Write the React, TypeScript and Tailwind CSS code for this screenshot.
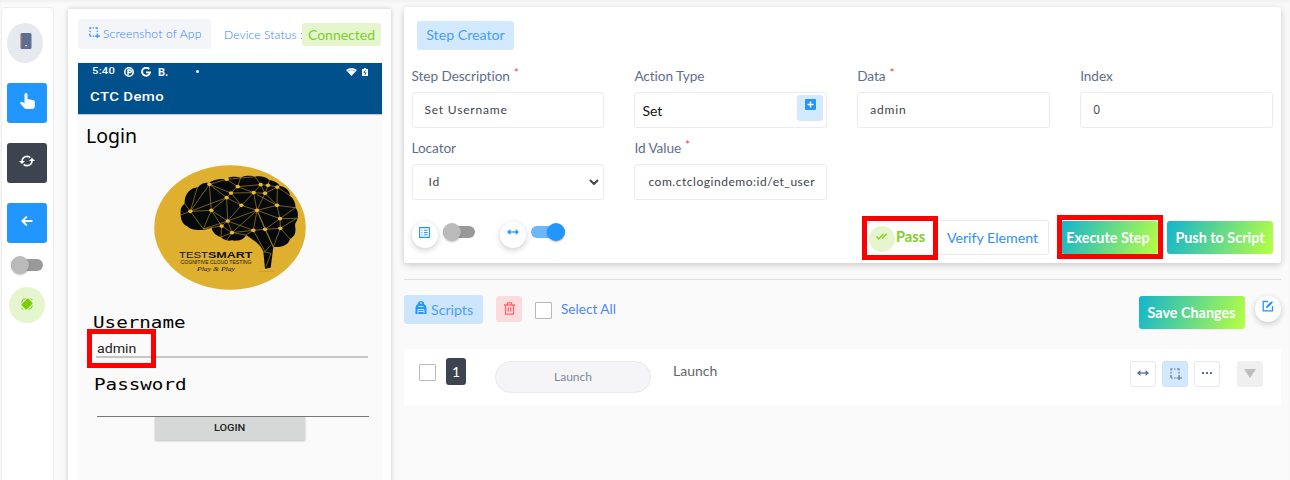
import React from "react";

type P = { children?: React.ReactNode; className?: string };

const gradient =
  "flex h-[33px] shrink-0 items-center justify-center rounded-[3px] bg-linear-[110deg,#12b4cf_0%,#b2fe45_97%] text-[14.4px] font-bold whitespace-nowrap text-white";

function Svg({ children, className = "", box = "0 0 24 24" }: P & { box?: string }) {
  return (
    <svg viewBox={box} className={`block shrink-0 ${className}`} fill="none" stroke="currentColor" strokeWidth="2">
      {children}
    </svg>
  );
}

function Selection({ className = "" }: P) {
  return (
    <Svg box="0 0 12 12" className={className}>
      <path
        d="M1 1h1.5M4 1h1.5M7 1h2M1 10h1.5M4 10h1.5M1 .5v2M1 4v1.5M1 7v3M9 .5v2M9 4v1.5M9 7v5M6.5 10H12"
        strokeWidth="1.2"
      />
    </Svg>
  );
}

function Arrows({ className = "" }: P) {
  return (
    <Svg box="0 0 12 8" className={className}>
      <path d="M1 4h10" strokeWidth="1.3" />
      <path d="M0 4l3.4-3v6zM12 4L8.600 1v6z" fill="currentColor" stroke="none" />
    </Svg>
  );
}

function ToggleOff() {
  return (
    <div className="flex h-3 w-8 items-center rounded-full bg-[#999]">
      <div className="size-[18px] shrink-0 rounded-full bg-[#bababa] shadow-[0_1px_2px_rgba(0,0,0,0.25)]" />
    </div>
  );
}

function ToggleOn() {
  return (
    <div className="flex h-3 w-[34px] items-center justify-end rounded-full bg-[#6cb6fa]">
      <div className="size-[18px] shrink-0 rounded-full bg-[#2196ff] shadow-[0_1px_2px_rgba(0,0,0,0.25)]" />
    </div>
  );
}

function Round({ children, className = "" }: P) {
  return (
    <div className={`flex size-[26px] shrink-0 justify-center rounded-full bg-white text-[#2196ff] shadow-[0_2px_6px_rgba(0,0,0,0.2)] ${className}`}>
      {children}
    </div>
  );
}

function Field({ label, required, children }: P & { label: string; required?: boolean }) {
  return (
    <div className="h-[72px]">
      <div className="flex h-6 text-[13.6px] leading-[17px] tracking-[-0.05px] text-[#5e6e8d]">
        {label}
        {required && <span className="-mt-1 ml-1 text-[12px] text-[#ef4444]">*</span>}
      </div>
      <div className="flex h-9 items-center overflow-hidden rounded-[3px] border border-[#ececee] bg-white text-[12px] tracking-[0.8px] whitespace-nowrap text-[#40444c]">
        {children}
      </div>
    </div>
  );
}

function Sidebar() {
  return (
    <aside className="mt-[7px] ml-[1px] h-[480px] w-[53px] shrink-0 rounded-sm border border-[#eee] bg-white pt-[15px] pl-[5px]">
      <div className="flex h-10 w-9 justify-center rounded-[50%] bg-[#e6eaef] pt-[10px] pl-[1px]">
        <svg viewBox="0 0 12 16" className="h-4 w-3">
          <rect x=".5" width="11" height="16" rx="1.500" fill="#5e6e93" />
          <rect x=".5" y="2" width=".7" height="12" fill="#df9b7c" />
          <rect x="5.400" y="12" width="1.500" height="1.300" fill="#fff" />
        </svg>
      </div>
      <div className="mt-5 flex size-10 items-start justify-center rounded-[3px] bg-[#2196ff] pt-[10px]">
        <svg viewBox="0 0 15 16" className="h-4 w-[15px]" fill="#fff">
          <path d="M4.500 1.600a1.500 1.500 0 0 1 3 0V6l6 1.300q1.300.3 1.300 1.600V13q0 3-2.800 3H6.200q-1.200 0-2-.9L.3 10.400q-.6-1 .5-1.500 1.200-.4 2.200.4l1.500 1.200z" />
        </svg>
      </div>
      <div className="mt-5 flex size-10 items-start justify-center rounded-[3px] bg-[#3d4450] pt-3 text-white">
        <Svg box="0 0 16 12" className="h-3 w-4">
          <path d="M3 6.500C3 3.500 5 1.300 8 1.300q2 0 3.300 1.300M13 5.500c0 3-2 5.200-5 5.200q-2 0-3.300-1.300" strokeWidth="1.700" />
          <path d="M0 6h6L3 9zM10 6h6l-3-3.200z" fill="#fff" stroke="none" />
        </Svg>
      </div>
      <div className="mt-5 flex size-10 items-start justify-center rounded-[3px] bg-[#2196ff] pt-[13px] text-white">
        <Svg box="0 0 12 10" className="h-[10px] w-3">
          <path d="M11.500 5H1.500M5.800.600L1.300 5l4.500 4.400" strokeWidth="1.900" />
        </Svg>
      </div>
      <div className="mt-4 ml-1">
        <ToggleOff />
      </div>
      <div className="mt-4 ml-[2px] flex size-9 items-start justify-center rounded-full bg-[#e5f6cf] pt-[11px]">
        <svg viewBox="0 0 12 12" className="size-3" fill="#76cf00">
          <rect x="1.300" y="2.400" width="9.400" height="7.200" rx="1" transform="rotate(-45 6 6)" />
          <path d="M.600 4.500Q.800 1 4.500.600M11.400 7.500q-.2 3.500-3.900 3.900M10 .5l1.500 1.500M.5 10L2 11.500" stroke="#76cf00" fill="none" />
        </svg>
      </div>
    </aside>
  );
}

const nodes = [
  [260, 73], [208, 88], [293, 95], [273, 114], [260, 128], [304, 151], [214, 166], [151, 169], [263, 198], [245, 213], [276, 233],
  [341, 113], [375, 115], [362, 89], [384, 91], [412, 96], [411, 151], [351, 166], [420, 191], [340, 226], [375, 223], [421, 220],
];

function BrainLogo() {
  return (
    <svg viewBox="0 0 152 125" className="h-[125px] w-[152px]">
      <ellipse cx="76" cy="62.500" rx="75.800" ry="62.300" fill="#dfb02f" />
      <g transform="translate(-14 -10) scale(.33333)">
        <path
          fill="#06090b"
          d="M122 172Q120 155 134 146C132 120 150 98 174 97C182 86 196 82 208 84C212 77 235 70 258 72C275 62 292 66 302 68C315 60 335 62 345 65C362 62 380 66 388 76C400 76 415 84 418 92C436 94 450 108 450 122C462 132 468 146 466 158C476 166 476 190 468 202C462 208 468 218 466 230C465 242 455 248 450 252C446 268 430 278 400 276L392 338L375 341L370 290C362 270 350 262 318 240C312 256 290 259 275 256C262 260 245 250 243 246C226 242 217 230 215 218C190 230 150 226 142 214C126 208 121 190 122 172Z"
        />
        <g stroke="#c79c2b" strokeWidth="1.700" fill="none">
          <path d="M151 169L208 88L260 73L293 95L273 114L260 128L214 166L151 169L190 222L245 213L214 166L208 88L273 114L304 151L260 128L208 88M172 97L151 169L122 180M134 146L151 169L260 128M214 166L263 198L260 128M304 151L263 198L245 213L276 233L340 226L263 198L351 166L304 151L341 113L293 95L362 89L341 113L375 115L362 89L384 91L375 115L412 96L384 91L388 76M273 114L341 113L351 166L375 115L411 151L412 96L450 122M260 73L345 65L362 89M293 95L302 68M411 151L466 158L420 191L351 166L411 151L420 191L470 190L421 220L420 191L375 223L351 166L340 226L375 223L421 220L450 252M340 226L375 290L392 270M375 223L400 276L421 220M351 166L400 276M245 213L243 246L276 233L263 198L190 222M276 233L318 240L340 226M370 290L393 295L378 335M214 166L190 222M276 233L260 256M411 151L350 118M351 166L276 233" />
        </g>
        <g fill="#eab934">
          {nodes.map(([x, y]) => (
            <ellipse key={`${x}-${y}`} cx={x} cy={y} rx="6.500" ry="5.500" />
          ))}
        </g>
        <ellipse cx="378" cy="349" rx="28" ry="2" fill="#cda02c" />
      </g>
      <g fontFamily="Liberation Sans" fill="#141208">
        <text x="25" y="92.700" fontSize="9.700" textLength="29" lengthAdjust="spacingAndGlyphs">TEST</text>
        <text x="54" y="92.700" fontSize="9.700" fontWeight="700" textLength="44.500" lengthAdjust="spacingAndGlyphs">SMART</text>
        <text x="26.500" y="99" fontSize="4.800" textLength="71" lengthAdjust="spacingAndGlyphs">COGNITIVE CLOUD TESTING</text>
        <text x="43" y="105.700" fontSize="5.500" fontStyle="italic" fontFamily="Liberation Serif" textLength="38" lengthAdjust="spacingAndGlyphs">Play &amp; Play</text>
      </g>
    </svg>
  );
}

function Phone() {
  return (
    <section className="mt-[9px] ml-[14px] h-[480px] w-[323px] shrink-0 bg-white px-[10px] pt-[10px] shadow-[0_0_5px_rgba(0,0,0,0.2)]">
      <div className="flex h-[44px] items-start">
        <div className="flex h-[30px] w-[133px] items-center rounded-[3px] bg-[#f4f5f8] pl-[11px] text-[12px] text-[#2f80ff]">
          <Selection className="mr-[3px] mb-[3px] size-[11px]" />
          <span className="font-light tracking-[0.200px] whitespace-nowrap">Screenshot of App</span>
        </div>
        <span className="ml-[13px] w-[78px] pt-[7px] text-[12px] leading-[18px] font-light tracking-[0.15px] whitespace-nowrap text-[#2f80ff]">Device Status :</span>
        <span className="mt-1 flex h-[23px] w-[79px] items-center justify-center rounded-[3px] bg-[#e5f6cf] text-[14px] text-[#7cce28]">Connected</span>
      </div>
      <div className="h-[430px] w-[304px] bg-[#fafafa] font-[Roboto]">
        <div className="h-[51px] bg-[#00508c] text-white shadow-[0_1px_1px_rgba(0,0,0,0.2)]">
          <div className="flex h-4 items-center pt-px pl-[14px] text-[9px] font-medium">
            <span className="w-[32px]"><span className="inline-block origin-left scale-x-[1.250] tracking-[0.2px]">5:40</span></span>
            <svg viewBox="0 0 10 10" className="size-[10px]">
              <circle cx="5" cy="5" r="4.200" fill="none" stroke="#fff" strokeWidth="1.600" />
              <path d="M4 8V3h2a1.300 1.300 0 0 1 0 2.600H4" stroke="#fff" strokeWidth="1.500" fill="none" />
            </svg>
            <svg viewBox="0 0 10 10" className="ml-[7px] size-[10px]">
              <path d="M8.200 2.200A4 4 0 1 0 9 5.400H5" stroke="#fff" strokeWidth="1.900" fill="none" />
            </svg>
            <span className="ml-[7px] w-[38px] pt-[2px] text-[11px] leading-[14px] font-bold">B.</span>
            <span className="size-[3px] rounded-full bg-white" />
            <svg viewBox="0 0 11 8" className="ml-[147px] h-2 w-[11px]">
              <path d="M0 2Q5.500-1.800 11 2L5.500 8z" fill="#fff" />
              <path d="M2 3q3.500-2 7 0" stroke="#7d9dbd" strokeWidth=".7" fill="none" />
            </svg>
            <svg viewBox="0 0 6 8" className="ml-[5px] h-2 w-[6px]">
              <path d="M0 1h2V0h2v1h2v7H0z" fill="#fff" />
              <path d="M3.500 2L2 4.700h2L2.800 7" stroke="#00508c" strokeWidth=".8" fill="none" />
            </svg>
          </div>
          <div className="pt-[9px] pl-[12px] text-[13px] leading-[18px] font-medium">
            <span className="inline-block origin-left scale-x-[1.150] tracking-[0.3px]">CTC Demo</span>
          </div>
        </div>
        <div className="flex h-[51px] items-start pt-[9px] pl-2 font-['Noto_Sans'] text-[19.500px] leading-[26px] text-black">Login</div>
        <div className="h-[125px] pl-[76px]">
          <BrainLogo />
        </div>
        <div className="mt-[22px] pl-[15px] font-['DejaVu_Sans_Mono'] text-[15.500px] leading-[22px] text-black">
          <span className="inline-block origin-left scale-x-[1.240]">Username</span>
        </div>
        <div className="ml-[18px] h-6 w-[272px] border-b-2 border-[#c6c6c6] pt-[7px] pl-px text-[12px] leading-[16px] text-[#222]">
          <span className="inline-block origin-left scale-x-[1.180]">admin</span>
        </div>
        <div className="mt-[16px] pl-[16px] font-['DejaVu_Sans_Mono'] text-[15.500px] leading-[22px] text-black">
          <span className="inline-block origin-left scale-x-[1.240]">Password</span>
        </div>
        <div className="ml-[19px] h-[21px] w-[272px] border-b border-[#777]" />
        <div className="ml-[77px] flex h-[23px] w-[150px] items-center justify-center bg-[#d6d8d7] text-[9.500px] font-medium text-[#202020] shadow-[0_1px_2px_rgba(0,0,0,0.25)]">
          <span className="inline-block scale-x-[1.150]">LOGIN</span>
        </div>
      </div>
    </section>
  );
}

function StepCreator() {
  return (
    <div className="h-[256px] rounded-[3px] bg-white pt-[14px] pr-2 pl-[7.500px] shadow-[0_2px_7px_rgba(0,0,0,0.2)]">
      <div className="ml-[5.500px] flex h-[29px] w-[97px] items-center justify-center rounded-[3px] bg-[#d2e9ff] pb-px text-[14.200px] text-[#479cff]">Step Creator</div>
      <div className="mt-[18px] grid grid-cols-4 gap-x-[30px]">
        <Field label="Step Description" required><span className="pl-3">Set Username</span></Field>
        <Field label="Action Type">
          <span className="pl-[7px] text-[14px] tracking-normal text-[#111]">Set</span>
          <span className="mr-[3px] mb-1 ml-auto flex size-[26px] justify-center rounded-[3px] bg-[#d2e9ff] pt-1">
            <svg viewBox="0 0 11 11" className="size-[11px]">
              <rect width="11" height="11" rx="1" fill="#2196ff" />
              <path d="M5.500 2.500v6M2.500 5.500h6" stroke="#fff" strokeWidth="1.300" />
            </svg>
          </span>
        </Field>
        <Field label="Data" required><span className="pl-3">admin</span></Field>
        <Field label="Index"><span className="pl-3 font-['Open_Sans']">0</span></Field>
        <Field label="Locator">
          <span className="pl-4">Id</span>
          <Svg box="0 0 10 6" className="mr-1 ml-auto h-[6px] w-[10px]"><path d="M1 1l4 4 4-4" /></Svg>
        </Field>
        <Field label="Id Value" required><span className="pl-[13px] tracking-[0.540px]">com.ctclogindemo:id/et_user</span></Field>
      </div>
      <div className="mt-2 flex h-[35px] items-start">
        <Round className="mt-[2px] pt-2">
          <Svg box="0 0 11 11" className="mt-[-3px] size-[11px]">
            <path d="M.6.600h9.800v9.800H.600zM2.500 3.300h1M5 3.300h3.700M2.500 5.500h1M5 5.500h3.700M2.500 7.700h1M5 7.700h3.700" strokeWidth="1.100" />
          </Svg>
        </Round>
        <div className="mt-[6px] ml-[5px]"><ToggleOff /></div>
        <Round className="mt-[2px] ml-[25px] pt-[6px]"><Arrows className="h-2 w-3" /></Round>
        <div className="mt-[6px] ml-[5px]"><ToggleOn /></div>
        <div className="mt-[6px] ml-auto flex size-[26px] shrink-0 justify-center rounded-full bg-[#e5f6cf] pt-[7px] text-[#76cf00]">
          <Svg box="0 0 12 7" className="h-[7px] w-3"><path d="M.500 3.500l2.300 2.300L7.500.800M6 5.500L10.800.800" strokeWidth="1.200" /></Svg>
        </div>
        <span className="ml-[1px] w-[35px] pt-2 text-[14.600px] leading-[18px] font-bold text-[#7fce2b]">Pass</span>
        <div className="ml-[5px] flex h-[35px] w-[113px] shrink-0 items-center justify-center rounded-[3px] border border-[#e9e9ec] text-[14.200px] whitespace-nowrap text-[#2f8fff]">Verify Element</div>
        <div className={`mt-px ml-3 w-[97px] pr-[3px] ${gradient}`}>Execute Step</div>
        <div className={`mt-px ml-[9px] w-[106px] ${gradient}`}>Push to Script</div>
      </div>
    </div>
  );
}

function Scripts() {
  return (
    <>
      <div className="mt-4 flex h-[70px] items-start border-t border-[#e0e0e0] pt-[15px]">
        <div className="flex h-[29px] w-[79px] items-center rounded-[3px] bg-[#cde5fd] pl-[11px] text-[14.200px] text-[#4b9eff]">
          <svg viewBox="0 0 12 13" className="mr-1 mb-1 h-[13px] w-3" fill="#2196ff">
            <path d="M3 3V1.800L4.500.300h3L9 1.800V3q2.500 1 2.500 4V13H.500V7Q.500 4 3 3zM5 1.500V2.700h2V1.500z" fillRule="evenodd" />
            <path d="M3.500 5.500h5M3 12.500V8.500h6v4M3 10.500h6" stroke="#cde5fd" fill="none" />
          </svg>
          Scripts
        </div>
        <div className="mt-px ml-[13px] flex size-[26px] justify-center rounded-[3px] bg-[#fbdcde] pt-[6px] text-[#ff6969]">
          <Svg box="0 0 11 13" className="h-[13px] w-[11px]">
            <path d="M0 3h11M3.500 3V.800h4V3M1.500 3v9.200h8V3M4.300 5.200v4.600M6.700 5.200v4.600" strokeWidth="1.300" />
          </Svg>
        </div>
        <div className="mt-[7px] ml-[13px] size-[17px] rounded-[1px] border border-[#b8b8b8] bg-white" />
        <span className="ml-[9px] pt-[5px] text-[13.600px] leading-[18px] text-[#4a86ff]">Select All</span>
        <div className={`mt-px ml-auto w-[106px] pr-px ${gradient}`}>Save Changes</div>
        <Round className="mt-px ml-[10px] pt-1">
          <Svg box="0 0 12 12" className="size-3"><path d="M6 1.500H1.200v9.300h9.300V6M4.300 7.700L10.500 1.500" strokeWidth="1.300" /><path d="M5 7l4.500-4.500" /></Svg>
        </Round>
      </div>
      <div className="flex h-14 items-start bg-white pl-[15px]">
        <div className="mt-[15px] size-[17px] rounded-[1px] border border-[#b8b8b8]" />
        <div className="mt-[9px] ml-[10px] flex h-[27px] w-5 items-center justify-center rounded-[3px] bg-[#3d4450] pb-px text-[14px] text-white">1</div>
        <div className="mt-3 ml-[29px] flex h-8 w-[156px] items-center justify-center rounded-full border border-[#e9e9ee] bg-[#f5f5f8] text-[12px] text-[#80869c]">Launch</div>
        <span className="mt-[13px] ml-[22px] text-[14px] leading-[18px] text-[#63666e]">Launch</span>
        <div className="mt-3 mr-[18px] ml-auto flex text-[#5e6e93]">
          <div className="flex size-[26px] justify-center rounded-[3px] border border-[#e9e9ec] pt-[7px]"><Arrows className="h-2 w-3" /></div>
          <div className="ml-[6px] flex size-[26px] justify-center rounded-[3px] border border-[#cde2f5] bg-[#d2e9ff] pt-[6px] pl-px"><Selection className="size-3" /></div>
          <div className="ml-[6px] flex size-[26px] justify-center gap-[2px] rounded-[3px] border border-[#e9e9ec] pt-[10px]">
            <i className="size-[2px] bg-[#5e6e93]" /><i className="size-[2px] bg-[#5e6e93]" /><i className="size-[2px] bg-[#5e6e93]" />
          </div>
          <div className="ml-[17px] flex size-[26px] justify-center rounded-[3px] bg-[#efefef] pt-2">
            <svg viewBox="0 0 12 9" className="h-[9px] w-3" fill="#bdbdbd"><path d="M0 0h12L6 9z" /></svg>
          </div>
        </div>
      </div>
    </>
  );
}

export default function App() {
  return (
    <div className="relative flex h-[480px] w-[1290px] items-start overflow-hidden bg-[#fafafa] font-[Lato,sans-serif] shadow-[inset_0_2px_3px_rgba(0,0,0,0.04)]">
      <Sidebar />
      <Phone />
      <main className="mt-[7px] ml-[13px] w-[877px] shrink-0">
        <StepCreator />
        <Scripts />
      </main>
      <div className="absolute top-[329px] left-[87px] h-[39px] w-[69px] border-[5px] border-[#f00]" />
      <div className="absolute top-[216px] left-[862px] h-11 w-[76px] border-[5px] border-[#f00]" />
      <div className="absolute top-[215px] left-[1057px] h-11 w-[106px] border-[5px] border-[#f00]" />
    </div>
  );
}
